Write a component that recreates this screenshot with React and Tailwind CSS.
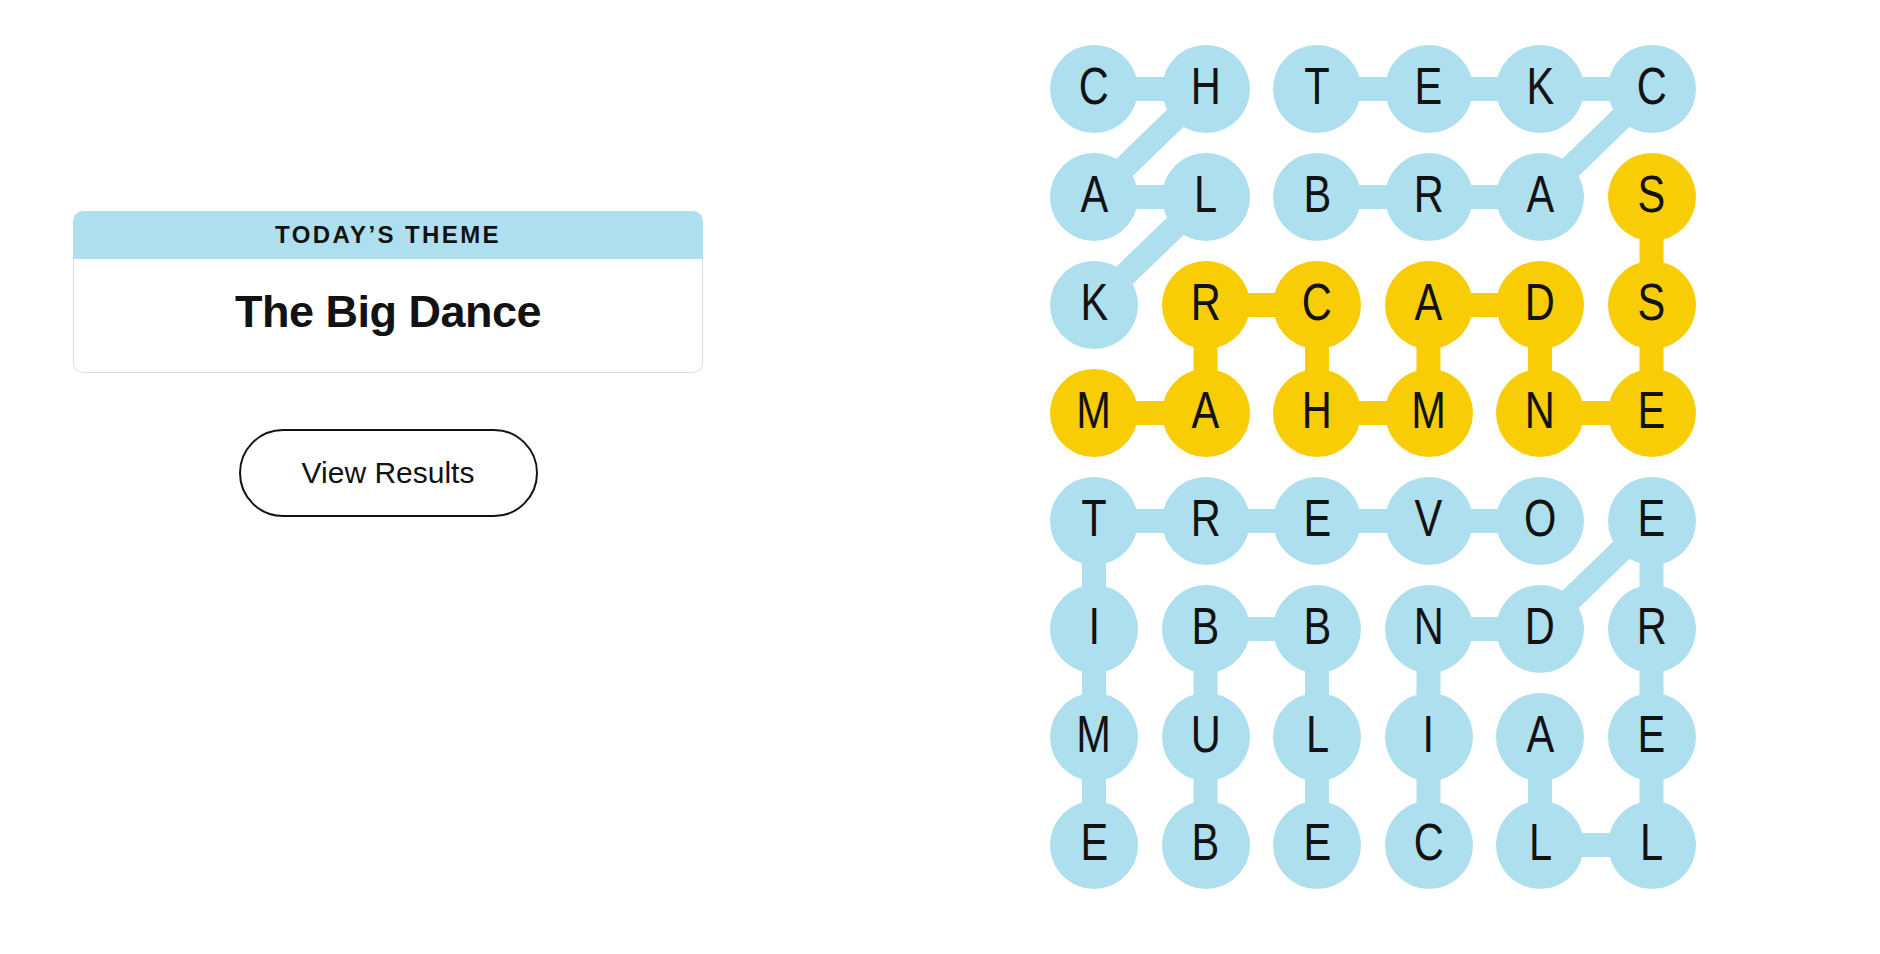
import React from 'react';

const BLUE = '#aedfee';
const YELLOW = '#f8cd05';

const ROWS = ['CHTEKC', 'ALBRAS', 'KRCADS', 'MAHMNE', 'TREVOE', 'IBBNDR', 'MULIAE', 'EBECLL'];

// spangram cells (row, col)
const SPANGRAM = ['3,0', '3,1', '2,1', '2,2', '3,2', '3,3', '2,3', '2,4', '3,4', '3,5', '2,5', '1,5'];

// word paths, each a list of [row, col]
const WORDS = [
  { color: BLUE, path: [[0, 0], [0, 1], [1, 0], [1, 1], [2, 0]] },
  { color: BLUE, path: [[1, 2], [1, 3], [1, 4], [0, 5], [0, 4], [0, 3], [0, 2]] },
  { color: BLUE, path: [[4, 4], [4, 3], [4, 2], [4, 1], [4, 0], [5, 0], [6, 0], [7, 0]] },
  { color: BLUE, path: [[7, 1], [6, 1], [5, 1], [5, 2], [6, 2], [7, 2]] },
  { color: BLUE, path: [[7, 3], [6, 3], [5, 3], [5, 4], [4, 5], [5, 5], [6, 5], [7, 5], [7, 4], [6, 4]] },
  { color: YELLOW, path: SPANGRAM.map((k) => k.split(',').map(Number)) },
];

const CELL = 88;
const STEP_X = 111.5;
const STEP_Y = 108;

const cx = (c) => CELL / 2 + c * STEP_X;
const cy = (r) => CELL / 2 + r * STEP_Y;

const Board = () => (
  <div className="relative w-[645.5px] h-[844px]">
    <svg className="absolute inset-0" width="645.5" height="844" viewBox="0 0 645.5 844">
      {WORDS.map((w, i) => (
        <polyline
          key={i}
          points={w.path.map(([r, c]) => `${cx(c)},${cy(r)}`).join(' ')}
          fill="none"
          stroke={w.color}
          strokeWidth="24"
          strokeLinejoin="round"
        />
      ))}
    </svg>
    <div className="relative grid grid-cols-[repeat(6,88px)] gap-x-[23.5px] gap-y-[20px]">
      {ROWS.map((row, r) =>
        row.split('').map((ch, c) => {
          const gold = SPANGRAM.includes(`${r},${c}`);
          return (
            <div
              key={`${r}-${c}`}
              className={`w-[88px] h-[88px] rounded-full flex items-center justify-center pb-[6px] text-[52px] leading-none text-[#121212] font-['Liberation_Sans',Arial,sans-serif] ${
                gold ? 'bg-[#f8cd05]' : 'bg-[#aedfee]'
              }`}
            >
              <span className="inline-block scale-x-[0.8]">{ch}</span>
            </div>
          );
        })
      )}
    </div>
  </div>
);

export default function App() {
  return (
    <div className="min-h-screen bg-white flex pl-[73px] pt-[45px] font-['Liberation_Sans',Arial,sans-serif] text-[#121212]">
      <div className="w-[630px] mt-[166px] flex flex-col items-center">
        <div className="w-full rounded-[10px] overflow-hidden">
          <div className="h-[48px] bg-[#aedfee] flex items-center justify-center">
            <span className="text-[24px] font-bold tracking-[2.4px] leading-none">TODAY’S THEME</span>
          </div>
          <div className="h-[114px] border-x-[1.5px] border-b-[1.5px] border-[#dcdcdc] rounded-b-[10px] flex items-center justify-center pb-[8px]">
            <h1 className="text-[45px] font-bold tracking-[-0.5px] leading-none">The Big Dance</h1>
          </div>
        </div>
        <button className="mt-[56px] w-[299px] h-[88px] rounded-full border-2 border-[#121212] bg-white text-[30px] leading-none">
          View Results
        </button>
      </div>
      <div className="ml-[347px]">
        <Board />
      </div>
    </div>
  );
}
